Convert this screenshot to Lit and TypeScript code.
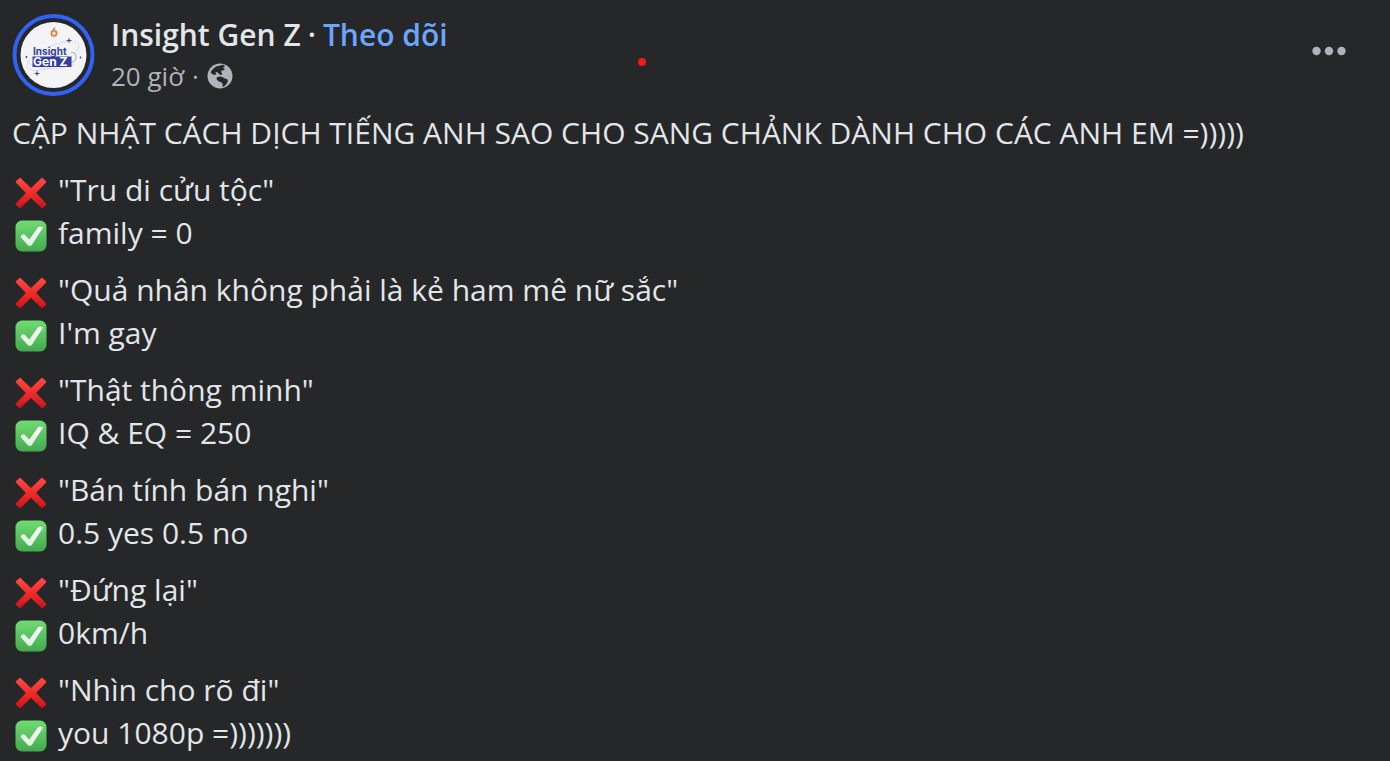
import { LitElement, html, css, svg } from "lit";
import { customElement, property } from "lit/decorators.js";

interface Pair {
  wrong: string;
  right: string;
}

const PAIRS: Pair[] = [
  { wrong: '"Tru di cửu tộc"', right: "family = 0" },
  { wrong: '"Quả nhân không phải là kẻ ham mê nữ sắc"', right: "I'm gay" },
  { wrong: '"Thật thông minh"', right: "IQ & EQ = 250" },
  { wrong: '"Bán tính bán nghi"', right: "0.5 yes 0.5 no" },
  { wrong: '"Đứng lại"', right: "0km/h" },
  { wrong: '"Nhìn cho rõ đi"', right: "you 1080p =)))))))" },
];

@customElement("mark-icon")
export class MarkIcon extends LitElement {
  @property() kind: "cross" | "check" = "cross";

  static styles = css`
    :host {
      display: block;
      flex: none;
      width: 32px;
      height: 32px;
    }
    .glyph {
      display: block;
      width: 100%;
      height: 100%;
    }
  `;

  render() {
    return this.kind === "cross"
      ? html`<svg class="glyph" viewBox="0 0 32 32" role="img" aria-label="Sai">
          <defs>
            <linearGradient id="red" x1="0" y1="0" x2="0" y2="1">
              <stop offset="0" stop-color="#ff4a45" />
              <stop offset="0.5" stop-color="#f02b2b" />
              <stop offset="1" stop-color="#c91419" />
            </linearGradient>
          </defs>
          <path
            fill="url(#red)"
            d="M4.2 1.2 1.1 4.1Q.4 4.9 1.1 5.7L10.9 16 1 26.3Q.3 27.1 1 27.9L4 30.7Q4.9 31.4 5.7 30.7L16 20.9 26.3 30.7Q27.1 31.4 28 30.7L31 27.9Q31.7 27.1 31 26.3L21.1 16 30.9 5.7Q31.6 4.9 30.9 4.1L27.8 1.2Q27 .5 26.2 1.2L16 11.1 5.8 1.2Q5 .5 4.2 1.2Z"
          />
        </svg>`
      : html`<svg class="glyph" viewBox="0 0 32 32" role="img" aria-label="Đúng">
          <defs>
            <linearGradient id="green" x1="0" y1="0" x2="0" y2="1">
              <stop offset="0" stop-color="#70db72" />
              <stop offset="1" stop-color="#43aa50" />
            </linearGradient>
            <linearGradient id="tick" x1="0" y1="0" x2="0" y2="1">
              <stop offset="0" stop-color="#ffffff" />
              <stop offset="1" stop-color="#d9f2dc" />
            </linearGradient>
          </defs>
          <rect x="0.5" y="0.5" width="31" height="31" rx="6.5" fill="url(#green)" />
          <path
            fill="url(#tick)"
            d="M22.6 7.9Q23.3 6.7 24.5 6.7L26.7 6.8Q28.1 7.1 27.4 8.5L16.8 25Q14.8 27 12.7 25L6 17.5Q5.2 16.2 6.3 15.3L8 14.3Q9.2 13.9 10 14.9L14.2 19.4Z"
          />
        </svg>`;
  }
}

@customElement("page-avatar")
export class PageAvatar extends LitElement {
  static styles = css`
    :host {
      display: block;
      flex: none;
      width: 83px;
      height: 83px;
    }
    .picture {
      display: block;
      width: 100%;
      height: 100%;
    }
    .word {
      font-family: Inter, "Open Sans", sans-serif;
      font-weight: 700;
      font-size: 10px;
    }
    .large {
      font-size: 12px;
    }
  `;

  private star(x: number, y: number, r: number) {
    const c = r * 0.2;
    return svg`<path fill="#3b45a0" d=${`M${x} ${y - r}L${x + c} ${y - c}L${x + r} ${y}L${x + c} ${y + c}L${x} ${y + r}L${x - c} ${y + c}L${x - r} ${y}L${x - c} ${y - c}Z`} />`;
  }

  render() {
    return html`<svg class="picture" viewBox="0 0 83 83" role="img" aria-label="Insight Gen Z">
      <circle cx="41.5" cy="41" r="39" fill="none" stroke="#2f62f5" stroke-width="4" />
      <circle cx="41.5" cy="41" r="33" fill="#f4f4f6" />
      <g fill="none" stroke="#cfd1e6" stroke-width="0.6">
        <ellipse cx="41" cy="42" rx="28" ry="10" transform="rotate(-24 41 42)" />
        <path d="M14 40Q12 48 24 53T62 51" />
      </g>
      <path d="M59 38Q65 39 64 44T58 48" fill="none" stroke="#8a90c8" stroke-width="0.8" />
      <circle cx="42" cy="19.3" r="2.6" fill="none" stroke="#ee7d33" stroke-width="1.8" />
      <path d="M41.5 16Q41.5 14 43.5 14" fill="none" stroke="#5f9a45" stroke-width="1.2" />
      ${this.star(57, 26.5, 3.2)} ${this.star(25, 59.5, 3.2)}
      <circle cx="14.5" cy="43" r="0.9" fill="#3b45a0" />
      <circle cx="68.5" cy="43.5" r="0.9" fill="#3b45a0" />
      <rect x="20.5" y="42.5" width="39" height="10.5" fill="#3440a0" />
      <text class="word" x="21" y="40.5" fill="#3440a0">Insight</text>
      <text class="word large" x="21" y="52" fill="#ffffff">Gen Z</text>
    </svg>`;
  }
}

@customElement("app-root")
export class AppRoot extends LitElement {
  static styles = css`
    :host {
      display: block;
      box-sizing: border-box;
      position: relative;
      min-height: 100vh;
      padding: 14px 12px 0;
      overflow: hidden;
      background: #252728;
      color: #e2e5e9;
      font-family: "Segoe UI", "Open Sans", "Noto Sans", sans-serif;
    }
    .header {
      display: flex;
      align-items: flex-start;
      gap: 16px;
      margin-bottom: 14px;
    }
    .who {
      flex: 1;
      min-width: 0;
    }
    .line {
      display: flex;
      align-items: center;
      gap: 7px;
      margin: 0;
      line-height: 42px;
      white-space: nowrap;
    }
    .title {
      font-size: 30px;
      font-weight: 600;
    }
    .meta {
      gap: 8px;
      font-size: 26px;
      font-weight: 500;
      line-height: 40px;
      color: #b0b3b8;
    }
    .name {
      color: inherit;
      text-decoration: none;
    }
    .follow,
    .more {
      padding: 0;
      border: 0;
      background: none;
      font: inherit;
      color: #6ba5fc;
      cursor: pointer;
    }
    .globe {
      display: block;
      width: 26px;
      height: 26px;
    }
    .more {
      margin: 32px 32px 0 0;
    }
    .dots {
      display: block;
      width: 34px;
      height: 10px;
    }
    .body {
      display: grid;
      gap: 14px;
      font-size: 30px;
      line-height: 43px;
    }
    .text {
      margin: 0;
    }
    .item {
      display: flex;
      align-items: center;
      gap: 11px;
      padding-left: 3px;
    }
    .icon {
      margin-top: 7px;
    }
    .pointer {
      position: absolute;
      left: 638px;
      top: 58px;
      width: 8px;
      height: 8px;
      border-radius: 50%;
      background: #ee1c1c;
    }
  `;

  render() {
    return html`
      <header class="header">
        <page-avatar></page-avatar>
        <div class="who">
          <h2 class="line title">
            <a class="name" href="#">Insight Gen Z</a>
            <span>·</span>
            <button class="follow" type="button">Theo dõi</button>
          </h2>
          <p class="line meta">
            <span>20 giờ</span>
            <span>·</span>
            <svg class="globe" viewBox="0 0 26 26" role="img" aria-label="Công khai">
              <circle cx="13" cy="13" r="12.5" fill="#b0b3b8" />
              <path
                fill="#252728"
                d="M15.6 1.8 13 2.7 9.5 3.2 6.8 5.2 4.2 8 3.7 9.8 5.6 11.2 8.4 11.9 9.4 10.6 8.2 9.6 9.6 9 11.4 9.9 12.4 11.6 14.4 11.9 15.4 10.6 14 9.2 14.6 7.6 17 7.2 17.8 5.9 15.6 4.8 17.6 3.9 17.2 2.2Z"
              />
              <path
                fill="#252728"
                d="M9.6 14.6 12.4 13.6 15.5 14 17.3 15.2 20.4 16.2 20.9 18.2 19.3 21.2 17 23.4 15.4 24 15.8 21.6 14.6 19.6 11.4 18.2 9.8 16.4Z"
              />
            </svg>
          </p>
        </div>
        <button class="more" type="button" aria-label="Tùy chọn">
          <svg class="dots" viewBox="0 0 34 10" fill="#b0b3b8" aria-hidden="true">
            <circle cx="4.5" cy="5" r="4.2" />
            <circle cx="17" cy="5" r="4.2" />
            <circle cx="29.5" cy="5" r="4.2" />
          </svg>
        </button>
      </header>
      <div class="body">
        <p class="text">CẬP NHẬT CÁCH DỊCH TIẾNG ANH SAO CHO SANG CHẢNK DÀNH CHO CÁC ANH EM =)))))</p>
        ${PAIRS.map(
          (pair) => html`<div>
            <p class="text item"><mark-icon class="icon" kind="cross"></mark-icon>${pair.wrong}</p>
            <p class="text item"><mark-icon class="icon" kind="check"></mark-icon>${pair.right}</p>
          </div>`,
        )}
      </div>
      <span class="pointer"></span>
    `;
  }
}
